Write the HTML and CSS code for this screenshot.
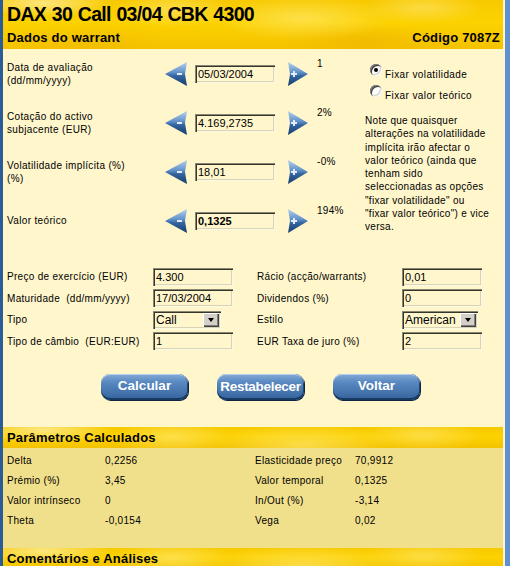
FILE: index.html
```html
<!DOCTYPE html>
<html lang="pt">
<head>
<meta charset="utf-8">
<title>DAX 30 Call 03/04 CBK 4300</title>
<link rel="stylesheet" href="styles.css">
</head>
<body>
<div class="page">
  <div class="edge-left"></div>
  <div class="main">
    <header class="hdr">
      <h1 class="title">DAX 30 Call 03/04 CBK 4300</h1>
      <div class="subbar">
        <h2 class="sub">Dados do warrant</h2>
        <span class="code">Código 7087Z</span>
      </div>
    </header>

    <section class="calc">
      <div class="rows">
        <div class="row">
          <div class="lbl">Data de avaliação<br>(dd/mm/yyyy)</div>
          <svg class="arr-m" width="22" height="24" viewBox="0 0 22 24"><defs><linearGradient id="g1" x1="0" y1="0" x2="0" y2="1"><stop offset="0" stop-color="#b8d1ee"/><stop offset=".42" stop-color="#6394cb"/><stop offset=".58" stop-color="#3465a0"/><stop offset="1" stop-color="#163c6c"/></linearGradient></defs><path d="M0 12 L22 0 L20 12 L22 24 Z" fill="url(#g1)"/><rect x="12" y="11" width="5" height="2" fill="#e2edf9"/></svg>
          <div class="field">05/03/2004</div>
          <svg class="arr-p" width="20" height="24" viewBox="0 0 20 24"><defs><linearGradient id="g2" x1="0" y1="0" x2="0" y2="1"><stop offset="0" stop-color="#b8d1ee"/><stop offset=".42" stop-color="#6394cb"/><stop offset=".58" stop-color="#3465a0"/><stop offset="1" stop-color="#163c6c"/></linearGradient></defs><path d="M20 12 L0 0 L2 12 L0 24 Z" fill="url(#g2)"/><rect x="3" y="11" width="6" height="2" fill="#e2edf9"/><rect x="5" y="9" width="2" height="6" fill="#e2edf9"/></svg>
          <div class="pct">1</div>
        </div>
        <div class="row">
          <div class="lbl">Cotação do activo<br>subjacente (EUR)</div>
          <svg class="arr-m" width="22" height="24" viewBox="0 0 22 24"><defs><linearGradient id="g3" x1="0" y1="0" x2="0" y2="1"><stop offset="0" stop-color="#b8d1ee"/><stop offset=".42" stop-color="#6394cb"/><stop offset=".58" stop-color="#3465a0"/><stop offset="1" stop-color="#163c6c"/></linearGradient></defs><path d="M0 12 L22 0 L20 12 L22 24 Z" fill="url(#g3)"/><rect x="12" y="11" width="5" height="2" fill="#e2edf9"/></svg>
          <div class="field">4.169,2735</div>
          <svg class="arr-p" width="20" height="24" viewBox="0 0 20 24"><defs><linearGradient id="g4" x1="0" y1="0" x2="0" y2="1"><stop offset="0" stop-color="#b8d1ee"/><stop offset=".42" stop-color="#6394cb"/><stop offset=".58" stop-color="#3465a0"/><stop offset="1" stop-color="#163c6c"/></linearGradient></defs><path d="M20 12 L0 0 L2 12 L0 24 Z" fill="url(#g4)"/><rect x="3" y="11" width="6" height="2" fill="#e2edf9"/><rect x="5" y="9" width="2" height="6" fill="#e2edf9"/></svg>
          <div class="pct">2%</div>
        </div>
        <div class="row">
          <div class="lbl">Volatilidade implícita (%)<br>(%)</div>
          <svg class="arr-m" width="22" height="24" viewBox="0 0 22 24"><defs><linearGradient id="g5" x1="0" y1="0" x2="0" y2="1"><stop offset="0" stop-color="#b8d1ee"/><stop offset=".42" stop-color="#6394cb"/><stop offset=".58" stop-color="#3465a0"/><stop offset="1" stop-color="#163c6c"/></linearGradient></defs><path d="M0 12 L22 0 L20 12 L22 24 Z" fill="url(#g5)"/><rect x="12" y="11" width="5" height="2" fill="#e2edf9"/></svg>
          <div class="field">18,01</div>
          <svg class="arr-p" width="20" height="24" viewBox="0 0 20 24"><defs><linearGradient id="g6" x1="0" y1="0" x2="0" y2="1"><stop offset="0" stop-color="#b8d1ee"/><stop offset=".42" stop-color="#6394cb"/><stop offset=".58" stop-color="#3465a0"/><stop offset="1" stop-color="#163c6c"/></linearGradient></defs><path d="M20 12 L0 0 L2 12 L0 24 Z" fill="url(#g6)"/><rect x="3" y="11" width="6" height="2" fill="#e2edf9"/><rect x="5" y="9" width="2" height="6" fill="#e2edf9"/></svg>
          <div class="pct">-0%</div>
        </div>
        <div class="row">
          <div class="lbl">Valor teórico</div>
          <svg class="arr-m" width="22" height="24" viewBox="0 0 22 24"><defs><linearGradient id="g7" x1="0" y1="0" x2="0" y2="1"><stop offset="0" stop-color="#b8d1ee"/><stop offset=".42" stop-color="#6394cb"/><stop offset=".58" stop-color="#3465a0"/><stop offset="1" stop-color="#163c6c"/></linearGradient></defs><path d="M0 12 L22 0 L20 12 L22 24 Z" fill="url(#g7)"/><rect x="12" y="11" width="5" height="2" fill="#e2edf9"/></svg>
          <div class="field bold">0,1325</div>
          <svg class="arr-p" width="20" height="24" viewBox="0 0 20 24"><defs><linearGradient id="g8" x1="0" y1="0" x2="0" y2="1"><stop offset="0" stop-color="#b8d1ee"/><stop offset=".42" stop-color="#6394cb"/><stop offset=".58" stop-color="#3465a0"/><stop offset="1" stop-color="#163c6c"/></linearGradient></defs><path d="M20 12 L0 0 L2 12 L0 24 Z" fill="url(#g8)"/><rect x="3" y="11" width="6" height="2" fill="#e2edf9"/><rect x="5" y="9" width="2" height="6" fill="#e2edf9"/></svg>
          <div class="pct">194%</div>
        </div>
      </div>
      <aside class="side">
        <div class="opt"><span class="radio on"></span>Fixar volatilidade</div>
        <div class="opt"><span class="radio"></span>Fixar valor teórico</div>
        <p class="note">Note que quaisquer<br>alterações na volatilidade<br>implícita irão afectar o<br>valor teórico (ainda que<br>tenham sido<br>seleccionadas as opções<br>"fixar volatilidade" ou<br>"fixar valor teórico") e vice<br>versa.</p>
      </aside>
    </section>

    <section class="params">
      <div class="plbl">Preço de exercício (EUR)</div>
      <div class="field">4.300</div>
      <div class="plbl">Rácio (acção/warrants)</div>
      <div class="field">0,01</div>

      <div class="plbl">Maturidade&nbsp; (dd/mm/yyyy)</div>
      <div class="field">17/03/2004</div>
      <div class="plbl">Dividendos (%)</div>
      <div class="field">0</div>

      <div class="plbl">Tipo</div>
      <div class="select s-call"><span class="sv">Call</span><span class="sbtn"></span></div>
      <div class="plbl">Estilo</div>
      <div class="select s-style"><span class="sv">American</span><span class="sbtn"></span></div>

      <div class="plbl">Tipo de câmbio&nbsp; (EUR:EUR)</div>
      <div class="field">1</div>
      <div class="plbl">EUR Taxa de juro (%)</div>
      <div class="field">2</div>
    </section>

    <div class="buttons">
      <button class="btn">Calcular</button>
      <button class="btn btn-tight">Restabelecer</button>
      <button class="btn">Voltar</button>
    </div>

    <h3 class="band band-first">Parâmetros Calculados</h3>
    <div class="results">
      <div>Delta</div><div>0,2256</div><div>Elasticidade preço</div><div>70,9912</div>
      <div>Prémio (%)</div><div>3,45</div><div>Valor temporal</div><div>0,1325</div>
      <div>Valor intrínseco</div><div>0</div><div>In/Out (%)</div><div>-3,14</div>
      <div>Theta</div><div>-0,0154</div><div>Vega</div><div>0,02</div>
    </div>
    <h3 class="band">Comentários e Análises</h3>
  </div>
</div>
</body>
</html>
```

FILE: styles.css
```css
* { box-sizing: border-box; }
html, body { margin: 0; padding: 0; }
body {
  width: 510px;
  height: 566px;
  overflow: hidden;
  background: #6090cf;
  font-family: "Liberation Sans", Arial, sans-serif;
  color: #000;
}
.page { display: flex; height: 566px; }
.edge-left { flex: none; width: 3px; background: #2a5d97; }
.main {
  flex: none;
  width: 502px;
  padding-right: 2px;
  background: #fff6cc;
  overflow: hidden;
}

/* yellow textured bands */
.hdr, .band {
  background:
    radial-gradient(ellipse 70px 14px at 40px 3px, rgba(255,240,170,.75), rgba(255,240,170,0)),
    radial-gradient(ellipse 60px 18px at 170px 10px, rgba(255,232,120,.6), rgba(255,232,120,0)),
    radial-gradient(ellipse 90px 22px at 300px 18px, rgba(255,236,130,.55), rgba(255,236,130,0)),
    radial-gradient(ellipse 60px 16px at 420px 8px, rgba(255,228,110,.6), rgba(255,228,110,0)),
    radial-gradient(ellipse 80px 18px at 360px 40px, rgba(232,168,0,.35), rgba(232,168,0,0)),
    radial-gradient(ellipse 70px 20px at 90px 42px, rgba(236,176,0,.3), rgba(236,176,0,0)),
    linear-gradient(180deg, #f7c900 0%, #fcd200 45%, #f4c200 100%);
}
.hdr { height: 49px; }
.title {
  margin: 0;
  height: 28px;
  line-height: 29px;
  padding-left: 4px;
  font-size: 19.5px;
  font-weight: bold;
  letter-spacing: -0.7px;
  word-spacing: 1px;
}
.subbar {
  display: flex;
  justify-content: space-between;
  height: 21px;
  line-height: 19px;
  padding: 0 3px 0 4px;
}
.sub, .code {
  margin: 0;
  font-size: 13px;
  font-weight: bold;
  letter-spacing: 0.2px;
}

/* top calculator */
.calc { display: flex; }
.rows { flex: none; width: 360px; }
.row {
  display: flex;
  align-items: center;
  height: 49px;
  padding-left: 4px;
}
.lbl {
  flex: none;
  width: 158px;
  font-size: 10px;
  line-height: 13px;
  letter-spacing: 0.35px;
}
.arr-m, .arr-p { flex: none; display: block; }
.row .field { margin: 0 13px 0 8px; }
.pct {
  align-self: flex-start;
  margin: 9px 0 0 9px;
  font-size: 10px;
  line-height: 12px;
  letter-spacing: 0.3px;
}

.field {
  flex: none;
  width: 80px;
  height: 18px;
  padding: 2px 3px;
  font-size: 11px;
  line-height: 14px;
  background: #fff6cc;
  box-shadow:
    inset 1px 1px 0 #8a8674,
    inset 2px 2px 0 #35352c,
    inset -1px -1px 0 #fbf8e6,
    inset -2px -2px 0 #d9d3b6;
  white-space: nowrap;
}
.field.bold { font-weight: bold; }

.side { flex: 1; padding-top: 18px; }
.opt {
  display: flex;
  align-items: center;
  height: 14px;
  margin-left: 7px;
  font-size: 10px;
  letter-spacing: 0.4px;
}
.opt + .opt { margin-top: 7px; }
.radio {
  flex: none;
  width: 12px;
  height: 12px;
  margin: 0 3px 8px 0;
  border-radius: 50%;
  background: #fff;
  box-shadow:
    inset 1px 1px 0 #808080,
    inset -1px -1px 0 #ffffff,
    inset 2px 2px 0 #404040,
    inset -2px -2px 0 #d4d0c8;
  display: flex;
  align-items: center;
  justify-content: center;
}
.radio.on::after {
  content: "";
  width: 4px;
  height: 4px;
  border-radius: 50%;
  background: #000;
}
.note {
  margin: 12px 0 0 2px;
  font-size: 10px;
  line-height: 13.3px;
  letter-spacing: 0.3px;
  white-space: nowrap;
}

/* parameters grid */
.params {
  display: grid;
  grid-template-columns: 146px 104px 145px 80px;
  grid-auto-rows: 21.5px;
  align-items: center;
  padding: 21px 0 0 4px;
}
.plbl {
  font-size: 10px;
  letter-spacing: 0.3px;
  white-space: nowrap;
}
.select {
  display: flex;
  align-items: center;
  height: 18px;
  padding: 2px;
  background: #fff6cc;
  box-shadow:
    inset 1px 1px 0 #8a8674,
    inset 2px 2px 0 #35352c,
    inset -1px -1px 0 #fbf8e6,
    inset -2px -2px 0 #d9d3b6;
}
.s-call { width: 68px; }
.s-style { width: 76px; }
.sv {
  flex: 1;
  padding-left: 1px;
  font-size: 12px;
  line-height: 14px;
  white-space: nowrap;
}
.sbtn {
  flex: none;
  width: 16px;
  height: 14px;
  background: #d4d0c8;
  box-shadow:
    inset 1px 1px 0 #ffffff,
    inset -1px -1px 0 #404040,
    inset -2px -2px 0 #808080;
  display: flex;
  align-items: center;
  justify-content: center;
}
.sbtn::after {
  content: "";
  border-left: 3.5px solid transparent;
  border-right: 3.5px solid transparent;
  border-top: 4px solid #000;
}

/* buttons */
.buttons {
  display: flex;
  gap: 29px;
  padding-left: 98px;
  margin-top: 22px;
}
.btn {
  width: 87px;
  height: 26px;
  padding: 0 0 2px;
  border: 0;
  border-radius: 9px;
  background: linear-gradient(180deg, #86abd6 0%, #5a8ac2 30%, #4876ae 65%, #33629a 100%);
  box-shadow:
    inset 0 1px 0 #b3cdea,
    inset 0 -2px 0 #173a63,
    inset -1px 0 0 #1f4676,
    1px 1px 0 #0d2442;
  color: #fff;
  font-family: "Liberation Sans", Arial, sans-serif;
  font-weight: bold;
  font-size: 13.5px;
  line-height: 24px;
}
.btn-tight { letter-spacing: -0.3px; line-height: 21px; }

/* calculated parameters */
.band {
  margin: 0;
  height: 21px;
  line-height: 22px;
  padding-left: 4px;
  font-size: 13px;
  font-weight: bold;
  letter-spacing: 0.2px;
}
.band-first { margin-top: 27px; }
.results {
  display: grid;
  grid-template-columns: 98px 150px 100px 1fr;
  grid-auto-rows: 20px;
  align-items: center;
  padding: 2px 0 18px 4px;
  background: #f0df8b;
  font-size: 10px;
  letter-spacing: 0.3px;
}
```
